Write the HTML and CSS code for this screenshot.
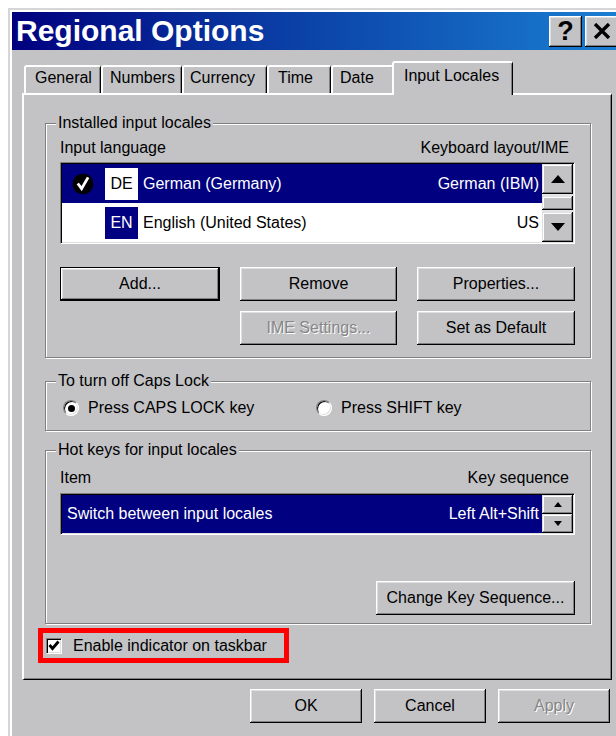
FILE: index.html
```html
<!DOCTYPE html>
<html lang="en">
<head>
<meta charset="utf-8">
<title>Regional Options</title>
<link rel="stylesheet" href="styles.css">
</head>
<body>
<div class="window">
  <div class="titlebar">
    <span class="title">Regional Options</span>
    <div class="cap-btns">
      <div class="cap-btn cap-help">?</div>
      <div class="cap-btn">
        <svg width="18" height="16" viewBox="0 0 18 16"><path d="M2 1 L16 15 M16 1 L2 15" stroke="#000" stroke-width="3.4" fill="none"/></svg>
      </div>
    </div>
  </div>

  <div class="tabs">
    <div class="tab tab-general">General</div>
    <div class="tab tab-numbers">Numbers</div>
    <div class="tab tab-currency">Currency</div>
    <div class="tab tab-time">Time</div>
    <div class="tab tab-date">Date</div>
    <div class="tab tab-active">Input Locales</div>
  </div>

  <div class="panel">
    <fieldset class="group group-locales">
      <legend>Installed input locales</legend>
      <div class="col-head"><span>Input language</span><span>Keyboard layout/IME</span></div>
      <div class="listbox">
        <div class="rows">
          <div class="row row-sel">
            <svg class="mark" width="22" height="22" viewBox="0 0 22 22"><path d="M11 0.8 C17 0.6 21.4 4.6 21.2 11 C21 17.2 16.8 21.4 10.8 21.2 C4.6 21 0.6 17 0.8 10.8 C1 4.8 5 1 11 0.8Z" fill="#000"/><path d="M6.6 11.6 L9.6 15.6 L15.4 5.6" stroke="#fff" stroke-width="2.8" fill="none" stroke-linecap="square"/></svg>
            <span class="code code-light">DE</span>
            <span class="name">German (Germany)</span>
            <span>German (IBM)</span>
          </div>
          <div class="row">
            <span class="mark"></span>
            <span class="code code-dark">EN</span>
            <span class="name">English (United States)</span>
            <span>US</span>
          </div>
        </div>
        <div class="vscroll">
          <div class="sb-btn sb-big">
            <svg width="14" height="8" viewBox="0 0 14 8"><path d="M0 8 L7 0 L14 8Z" fill="#000"/></svg>
          </div>
          <div class="sb-track"><div class="sb-thumb"></div></div>
          <div class="sb-btn sb-big">
            <svg width="14" height="8" viewBox="0 0 14 8"><path d="M0 0 L7 8 L14 0Z" fill="#000"/></svg>
          </div>
        </div>
      </div>
      <div class="btn-grid">
        <div class="btn btn-default">Add...</div>
        <div class="btn">Remove</div>
        <div class="btn">Properties...</div>
        <div class="btn btn-disabled col-2">IME Settings...</div>
        <div class="btn col-3">Set as Default</div>
      </div>
    </fieldset>

    <fieldset class="group group-caps">
      <legend>To turn off Caps Lock</legend>
      <div class="radio-row">
        <label class="radio-opt radio-first"><span class="radio radio-on"></span>Press CAPS LOCK key</label>
        <label class="radio-opt"><span class="radio"></span>Press SHIFT key</label>
      </div>
    </fieldset>

    <fieldset class="group group-hotkeys">
      <legend>Hot keys for input locales</legend>
      <div class="col-head"><span>Item</span><span>Key sequence</span></div>
      <div class="listbox listbox-hot">
        <div class="rows">
          <div class="row row-sel row-hot">
            <span class="name">Switch between input locales</span>
            <span>Left Alt+Shift</span>
          </div>
        </div>
        <div class="vscroll">
          <div class="sb-btn sb-small">
            <svg width="8" height="5" viewBox="0 0 8 5"><path d="M0 5 L4 0 L8 5Z" fill="#000"/></svg>
          </div>
          <div class="sb-btn sb-small">
            <svg width="8" height="5" viewBox="0 0 8 5"><path d="M0 0 L4 5 L8 0Z" fill="#000"/></svg>
          </div>
        </div>
      </div>
      <div class="btn btn-keyseq">Change Key Sequence...</div>
    </fieldset>

    <div class="highlight">
      <span class="checkbox">
        <svg width="12" height="11" viewBox="0 0 12 11"><path d="M1.5 5 L4.5 8.5 L10.5 1.5" stroke="#000" stroke-width="2.8" fill="none"/></svg>
      </span>
      <span class="check-label">Enable indicator on taskbar</span>
    </div>
  </div>

  <div class="dialog-buttons">
    <div class="btn btn-dialog">OK</div>
    <div class="btn btn-dialog">Cancel</div>
    <div class="btn btn-dialog btn-disabled">Apply</div>
  </div>
</div>
</body>
</html>
```

FILE: styles.css
```css
* { box-sizing: border-box; }

body {
  margin: 0;
  background: #fff;
  overflow: hidden;
  font-family: "Liberation Sans", Arial, sans-serif;
  font-size: 16px;
  line-height: 18px;
  color: #000;
}

/* dialog frame */
.window {
  width: 618px;
  height: 728px;
  margin: 8px 0 0 8px;
  padding: 2px 4px 0 2px;
  background: #c3c3c6;
  border-top: 2px solid #d6d6d8;
  border-left: 2px solid #d6d6d8;
  box-shadow: inset 2px 2px #fff;
}

/* caption */
.titlebar {
  height: 38px;
  display: flex;
  align-items: center;
  justify-content: space-between;
  padding: 0 4px 0 4px;
  background: linear-gradient(90deg, #00007e 0%, #0a3fa6 45%, #1a7fd2 100%);
}

.title {
  color: #fff;
  font-weight: bold;
  font-size: 30px;
  line-height: 32px;
}

.cap-btns {
  display: flex;
  gap: 3px;
}

.cap-btn {
  width: 33px;
  height: 31px;
  display: flex;
  align-items: center;
  justify-content: center;
  background: #c3c3c6;
  box-shadow: inset -1px -1px #000, inset 1px 1px #fff, inset -2px -2px #808080, inset 2px 2px #dfdfdf;
}

.cap-help {
  font-weight: bold;
  font-size: 27px;
  line-height: 27px;
  padding-top: 1px;
}

/* tab strip */
.tabs {
  display: flex;
  align-items: flex-end;
  height: 32px;
  margin: 11px 0 0 12px;
}

.tab {
  height: 28px;
  padding: 2px 0 0 9px;
  background: #c3c3c6;
  border-top: 2px solid #fff;
  border-left: 2px solid #fff;
  border-right: 1px solid #000;
  border-radius: 3px 3px 0 0;
  box-shadow: inset -1px 0 #808080;
  white-space: nowrap;
}

.tab-general { width: 77px; padding-left: 9px; }
.tab-numbers { width: 81px; padding-left: 7px; }
.tab-currency { width: 85px; padding-left: 6px; }
.tab-time { width: 64px; }
.tab-date { width: 63px; padding-left: 7px; }

.tab-active {
  position: relative;
  z-index: 1;
  width: 121px;
  height: 34px;
  margin: 0 0 -2px -2px;
  padding: 4px 0 0 10px;
}

/* property page */
.panel {
  width: 590px;
  height: 587px;
  margin-left: 10px;
  padding: 19px 20px 0 21px;
  border-style: solid;
  border-width: 2px 1px 1px 2px;
  border-color: #fff #000 #000 #fff;
  box-shadow: inset -1px -1px #808080;
}

.group {
  margin: 0;
  min-width: 0;
  border: 1px solid #808080;
  box-shadow: inset 1px 1px #fff, 1px 1px #fff;
  padding: 7px 15px 12px 14px;
}

.group legend {
  padding: 0 2px;
  margin-left: -4px;
  line-height: 18px;
  background: #c3c3c6;
}

.group-caps {
  margin-top: 14px;
  padding: 9px 15px 13px 14px;
}

.group-hotkeys {
  margin-top: 10px;
  padding: 10px 15px 8px 14px;
}

.col-head {
  display: flex;
  justify-content: space-between;
  padding-right: 6px;
}

/* list views */
.listbox {
  display: flex;
  margin-top: 5px;
  padding: 1px;
  background: #fff;
  border: 1px solid;
  border-color: #808080 #fff #fff #808080;
  box-shadow: inset 1px 1px #000, inset -1px -1px #dfdfdf;
}

.listbox-hot {
  margin-top: 6px;
}

.rows {
  flex: 1;
}

.row {
  height: 39px;
  display: flex;
  align-items: center;
  padding-right: 3px;
}

.row-sel {
  background: #000080;
  color: #fff;
}

.row-hot {
  height: 38px;
  padding-left: 5px;
}

.row .name {
  flex: 1;
  margin-left: 5px;
}

.row-hot .name {
  margin-left: 0;
}

.mark {
  width: 22px;
  height: 22px;
  margin-left: 10px;
  flex: none;
}

.code {
  width: 33px;
  height: 32px;
  margin-left: 11px;
  display: flex;
  align-items: center;
  justify-content: center;
  flex: none;
}

.code-light {
  background: #fff;
  color: #000;
}

.code-dark {
  background: #000080;
  color: #fff;
}

.vscroll {
  width: 31px;
  display: flex;
  flex-direction: column;
}

.sb-btn {
  display: flex;
  align-items: center;
  justify-content: center;
  background: #c3c3c6;
  box-shadow: inset -1px -1px #000, inset 1px 1px #dfdfdf, inset -2px -2px #808080, inset 2px 2px #fff;
}

.sb-big {
  height: 30px;
}

.sb-small {
  flex: 1;
}

.sb-track {
  flex: 1;
  padding: 2px 0;
  background: #e4e4e6;
}

.sb-thumb {
  height: 100%;
  background: #c3c3c6;
  box-shadow: inset -1px -1px #000, inset 1px 1px #dfdfdf, inset -2px -2px #808080, inset 2px 2px #fff;
}

/* push buttons */
.btn {
  height: 34px;
  display: flex;
  align-items: center;
  justify-content: center;
  background: #c3c3c6;
  white-space: nowrap;
  box-shadow: inset -1px -1px #000, inset 1px 1px #fff, inset -2px -2px #808080, inset 2px 2px #dfdfdf;
}

.btn-default {
  box-shadow: inset 0 0 0 1px #000, inset -2px -2px #000, inset 2px 2px #fff, inset -3px -3px #808080, inset 3px 3px #dfdfdf;
}

.btn-disabled {
  color: #868686;
  text-shadow: 1px 1px #fff;
}

.btn-grid {
  display: grid;
  grid-template-columns: 160px 157px 158px;
  column-gap: 20px;
  row-gap: 10px;
  margin-top: 23px;
}

.col-2 { grid-column: 2; }
.col-3 { grid-column: 3; }

.btn-keyseq {
  width: 199px;
  margin: 46px 0 0 auto;
}

/* radio buttons */
.radio-row {
  display: flex;
}

.radio-opt {
  display: flex;
  align-items: center;
  gap: 9px;
}

.radio-first {
  width: 253px;
  margin-left: 3px;
}

.radio {
  width: 16px;
  height: 16px;
  border-radius: 50%;
  background: #fff;
  border: 1px solid;
  border-color: #808080 #fff #fff #808080;
  box-shadow: inset 1px 1px #000, inset -1px -1px #dfdfdf;
  display: flex;
  align-items: center;
  justify-content: center;
}

.radio-on::after {
  content: "";
  width: 7px;
  height: 7px;
  border-radius: 50%;
  background: #000;
}

/* check box with its red frame */
.highlight {
  width: 251px;
  height: 35px;
  margin: 4px 0 0 -7px;
  border: 5px solid #ff0000;
  display: flex;
  align-items: center;
  padding-left: 3px;
}

.checkbox {
  width: 16px;
  height: 16px;
  display: flex;
  align-items: center;
  justify-content: center;
  background: #fff;
  border: 1px solid;
  border-color: #808080 #fff #fff #808080;
  box-shadow: inset 1px 1px #000, inset -1px -1px #dfdfdf;
}

.check-label {
  margin-left: 11px;
  white-space: nowrap;
}

/* OK / Cancel / Apply */
.dialog-buttons {
  display: flex;
  justify-content: flex-end;
  gap: 12px;
  margin-top: 9px;
  padding-right: 12px;
}

.btn-dialog {
  width: 112px;
}
```
